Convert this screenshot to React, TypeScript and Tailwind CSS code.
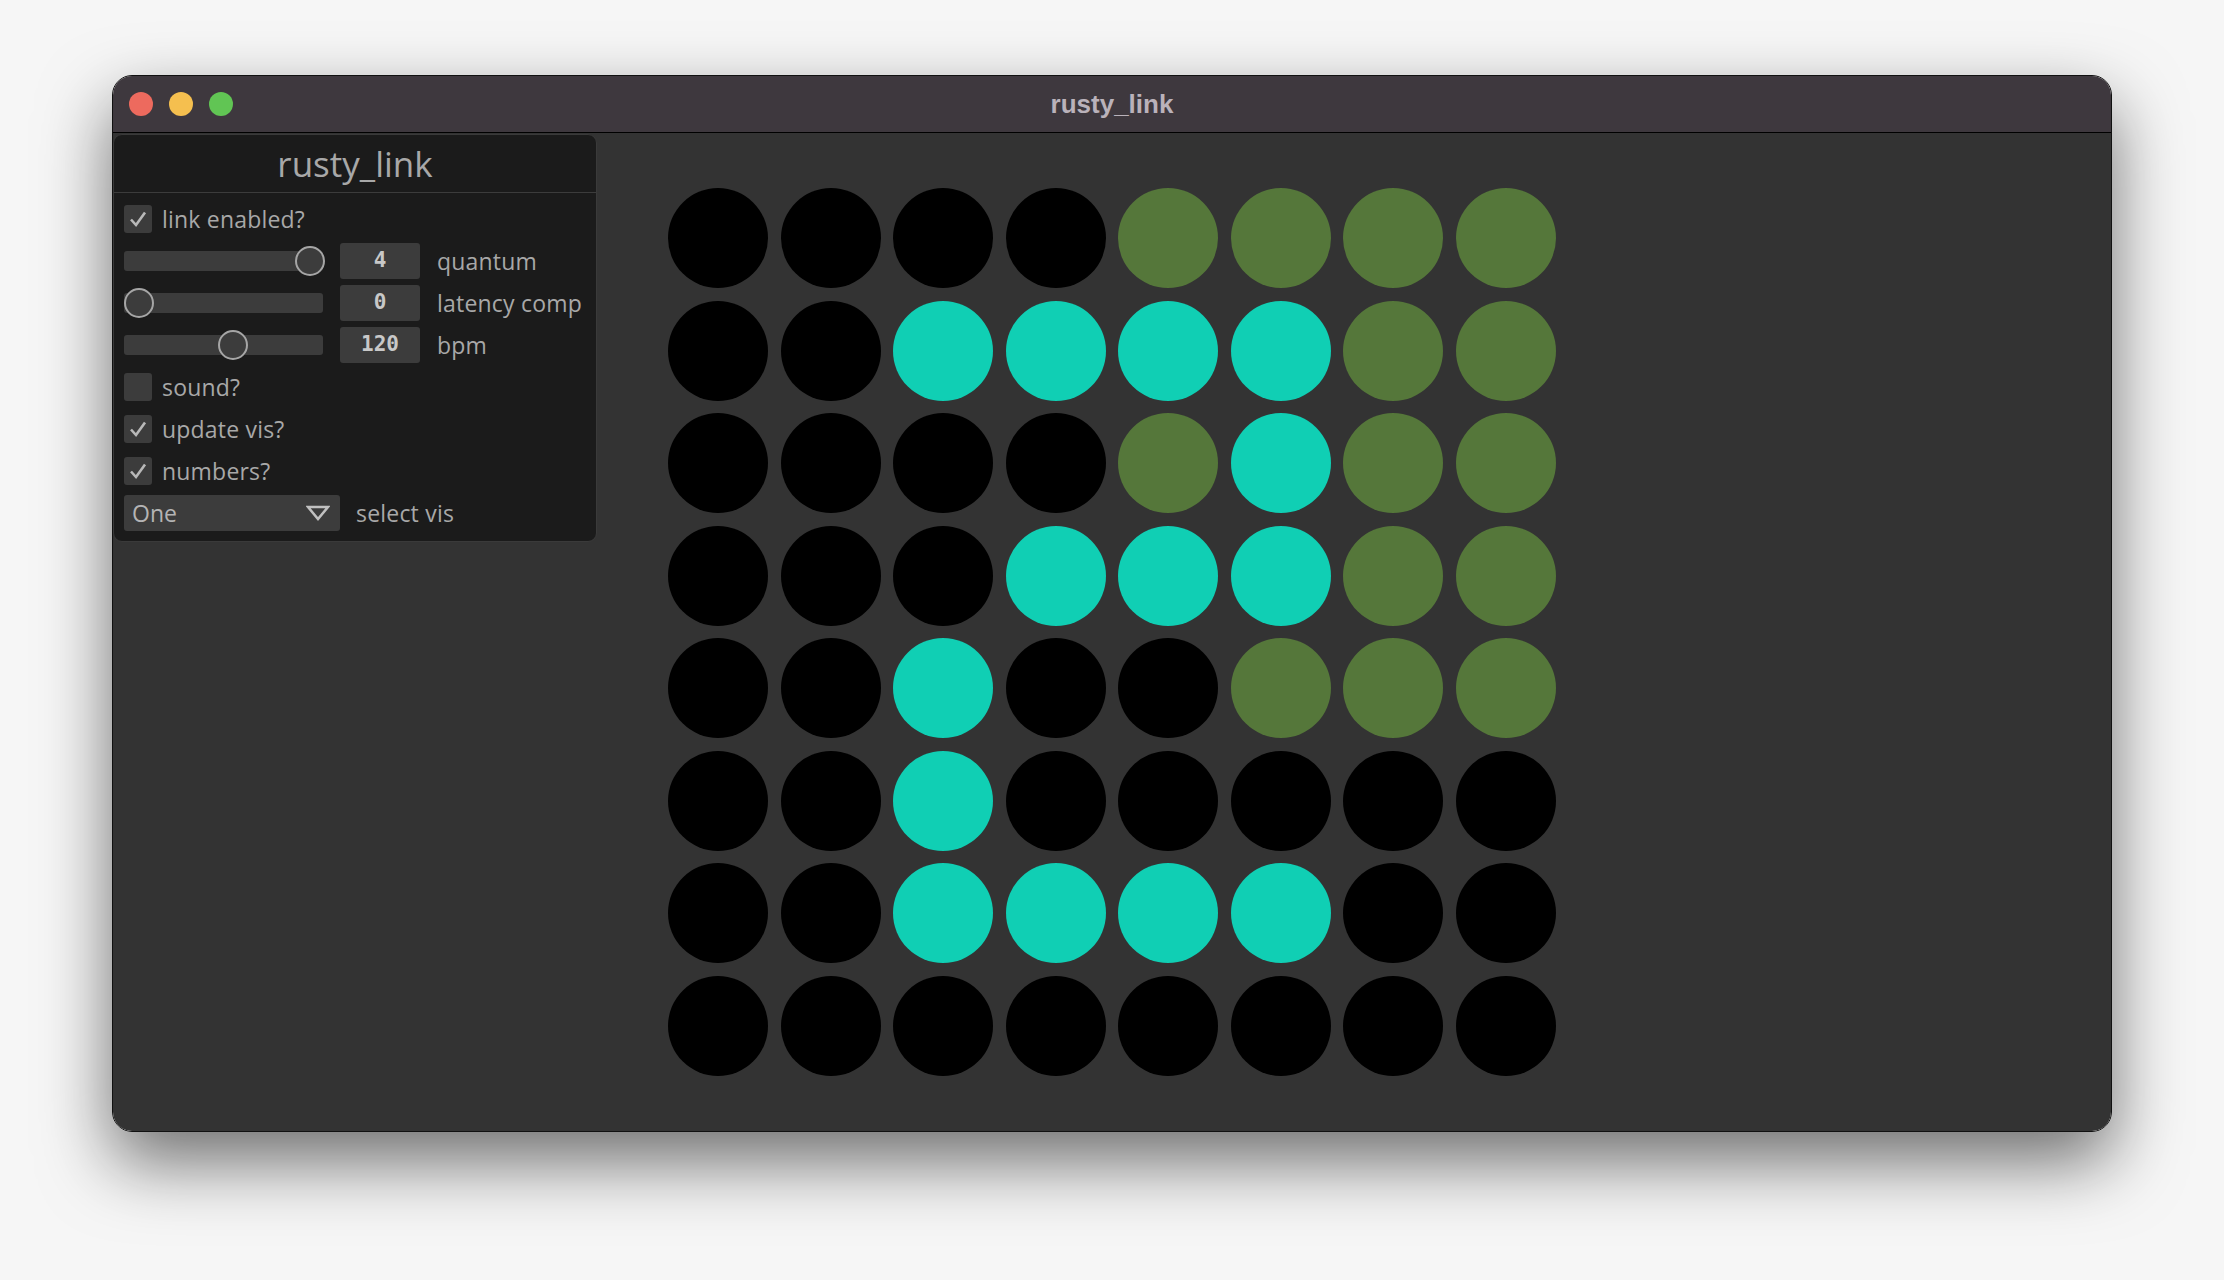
import React from "react"

const T = "t" // teal
const O = "o" // olive
const B = "b" // black

const grid: string[][] = [
  [B, B, B, B, O, O, O, O],
  [B, B, T, T, T, T, O, O],
  [B, B, B, B, O, T, O, O],
  [B, B, B, T, T, T, O, O],
  [B, B, T, B, B, O, O, O],
  [B, B, T, B, B, B, B, B],
  [B, B, T, T, T, T, B, B],
  [B, B, B, B, B, B, B, B],
]

const uiFont = { fontFamily: '"Open Sans", "Noto Sans", sans-serif' }
const monoFont = { fontFamily: '"DejaVu Sans Mono", monospace' }

function Check({ checked, label }: { checked: boolean; label: string }) {
  return (
    <div className="flex h-[36px] items-center gap-[10px]">
      <div className="flex h-[28px] w-[28px] items-center justify-center rounded-[3px] bg-[#3c3c3c]">
        {checked && (
          <svg width="20" height="20" viewBox="0 0 20 20">
            <path d="M3 10.5 L8 16 L17 3.5" fill="none" stroke="#b8b8b8" strokeWidth="2.6" />
          </svg>
        )}
      </div>
      <span className="text-[23px] leading-none tracking-[0.2px] text-[#a8a8a8]">{label}</span>
    </div>
  )
}

function SliderRow({ knob, value, label }: { knob: number; value: string; label: string }) {
  return (
    <div className="flex h-[36px] items-center">
      <div className="relative h-[20px] w-[199px] rounded-[3px] bg-[#3c3c3c]">
        <div
          className="absolute top-[-5px] h-[30px] w-[30px] rounded-full border-2 border-[#a6a6a6] bg-[#3c3c3c]"
          style={{ left: knob }}
        />
      </div>
      <div
        className="ml-[17px] flex h-[36px] w-[80px] items-center justify-center rounded-[3px] bg-[#3c3c3c] text-[21px] font-bold text-[#c8c8c8]"
        style={monoFont}
      >
        {value}
      </div>
      <span className="ml-[17px] text-[23px] leading-none tracking-[0.2px] text-[#a8a8a8]">{label}</span>
    </div>
  )
}

export default function App() {
  return (
    <div className="h-[1280px] w-[2224px] bg-[#f6f6f6] pl-[112px] pt-[75px]">
      <div className="flex h-[1057px] w-[2000px] flex-col overflow-hidden rounded-[20px] border border-[#111] shadow-[0_30px_70px_rgba(0,0,0,0.55)]">
        {/* title bar */}
        <div className="relative flex h-[57px] shrink-0 items-center justify-center border-b border-black bg-[#3e383e]">
          <div className="absolute left-[16px] top-[16px] flex gap-[16px]">
            <div className="h-[24px] w-[24px] rounded-full bg-[#ed6a5e]" />
            <div className="h-[24px] w-[24px] rounded-full bg-[#f5bf4f]" />
            <div className="h-[24px] w-[24px] rounded-full bg-[#61c554]" />
          </div>
          <span
            className="text-[26px] font-bold text-[#bab2ba]"
            style={{ fontFamily: '"Liberation Sans", Arial, sans-serif' }}
          >
            rusty_link
          </span>
        </div>

        {/* content */}
        <div className="flex flex-1 items-start bg-[#333333]">
          <div
            className="mt-[1px] flex w-[484px] flex-col rounded-[9px] border border-[#3a3a3a] bg-[#1b1b1b]"
            style={uiFont}
          >
            <div className="flex h-[58px] items-center justify-center border-b border-[#3c3c3c]">
              <span className="text-[35px] leading-none text-[#a8a8a8]">rusty_link</span>
            </div>
            <div className="flex flex-col gap-[6px] px-[10px] pb-[10px] pt-[8px]">
              <Check checked label="link enabled?" />
              <SliderRow knob={171} value="4" label="quantum" />
              <SliderRow knob={0} value="0" label="latency comp" />
              <SliderRow knob={94} value="120" label="bpm" />
              <Check checked={false} label="sound?" />
              <Check checked label="update vis?" />
              <Check checked label="numbers?" />
              <div className="flex h-[36px] items-center">
                <div className="flex h-[36px] w-[216px] items-center justify-between rounded-[3px] bg-[#3c3c3c] pl-[8px] pr-[10px]">
                  <span className="text-[23px] leading-none text-[#b4b4b4]">One</span>
                  <svg width="24" height="16" viewBox="0 0 24 16">
                    <path d="M2 2 L22 2 L12 14 Z" fill="none" stroke="#c0c0c0" strokeWidth="2.5" strokeLinejoin="miter" />
                  </svg>
                </div>
                <span className="ml-[16px] text-[23px] leading-none tracking-[0.2px] text-[#a8a8a8]">select vis</span>
              </div>
            </div>
          </div>

          {/* visualisation grid */}
          <div className="ml-[71px] mt-[55px] grid grid-cols-8 gap-[12.5px]">
            {grid.flat().map((c, i) => (
              <div
                key={i}
                className={
                  "h-[100px] w-[100px] rounded-full " +
                  (c === T ? "bg-[#10cfb4]" : c === O ? "bg-[#55773a]" : "bg-black")
                }
              />
            ))}
          </div>
        </div>
      </div>
    </div>
  )
}
